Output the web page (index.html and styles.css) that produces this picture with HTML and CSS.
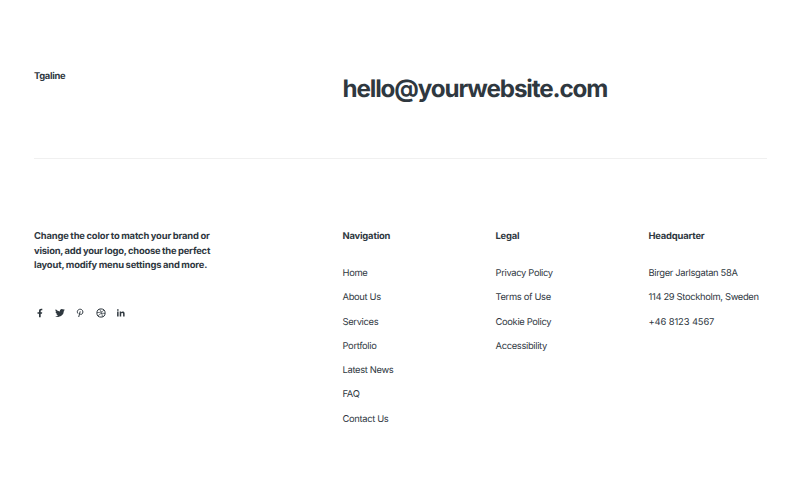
FILE: index.html
```html
<!DOCTYPE html>
<html lang="en">
<head>
<meta charset="utf-8">
<title>Tgaline</title>
<link rel="stylesheet" href="styles.css">
</head>
<body>
<footer class="footer">
  <div class="top">
    <div class="brand">Tgaline</div>
    <a class="email">hello@yourwebsite.com</a>
  </div>
  <div class="grid">
    <section class="about">
      <p>Change the color to match your brand or<br><span class="tight">vision, add your logo, choose the perfect</span><br>layout, modify menu settings and more.</p>
      <div class="social">
        <svg viewBox="0 0 12 12"><path d="M5 10.200V6.700H3.500V5.200H5V4c0-1.400.8-2.200 2.100-2.200H8.300V3.300H7.500c-.6 0-.8.3-.8.8v1.100h1.500L8 6.700H6.700v3.500z"/></svg>
        <svg viewBox="0 0 24 24" class="bird"><path d="M23 5a9 9 0 0 1-2.600.7 4.500 4.500 0 0 0 2-2.500 9 9 0 0 1-2.900 1.100A4.500 4.500 0 0 0 11.800 8.400 12.800 12.800 0 0 1 2.500 3.700a4.500 4.500 0 0 0 1.400 6 4.500 4.500 0 0 1-2-.6 4.500 4.500 0 0 0 3.600 4.500 4.500 4.500 0 0 1-2 .1 4.500 4.500 0 0 0 4.200 3.100A9 9 0 0 1 1 18.700 12.800 12.800 0 0 0 20.700 7.300 9 9 0 0 0 23 5z"/></svg>
        <svg viewBox="0 0 12 12" class="line"><path d="M4 6.600C2.300 4.500 4 2.200 6.200 2.200S9.500 4.600 8.600 6.300C7.900 7.700 6.300 7.600 5.800 6.700M6.200 4.400 4.700 10"/></svg>
        <svg viewBox="0 0 12 12" class="line"><circle cx="6" cy="6" r="4.100"/><path class="thin" d="M2 5.500c3 .2 5.500-.5 7-2.500M4.500 2.200C6.200 4.500 7 6.600 7.500 9.800M3.200 9c1.300-2.500 3.900-3.300 6.900-2.500"/></svg>
        <svg viewBox="0 0 12 12"><path d="M2.100 4.600h1.500V9.500H2.100zM2.100 2.300h1.500v1.400H2.100zM4.700 4.600h1.400v.7c.8-1.300 3.500-1.200 3.500 1.200v3H8.100V6.900c0-1.400-1.900-1.300-1.900 0v2.600H4.700z"/></svg>
      </div>
    </section>
    <nav>
      <h2>Navigation</h2>
      <ul><li>Home</li><li>About Us</li><li>Services</li><li>Portfolio</li><li>Latest News</li><li>FAQ</li><li>Contact Us</li></ul>
    </nav>
    <nav>
      <h2>Legal</h2>
      <ul><li>Privacy Policy</li><li>Terms of Use</li><li>Cookie Policy</li><li>Accessibility</li></ul>
    </nav>
    <section>
      <h2>Headquarter</h2>
      <ul><li>Birger Jarlsgatan 58A</li><li>114 29 Stockholm, Sweden</li><li>+46 8123 4567</li></ul>
    </section>
  </div>
</footer>
</body>
</html>
```
FILE: styles.css
```css
* { box-sizing: border-box; }
body { margin: 0; background: #fff; color: #2f383f; font-family: Inter, "Liberation Sans", sans-serif; font-size: 9.4px; text-rendering: geometricPrecision; }
.footer { padding: 69px 33px 0 34px; }
.top { display: grid; grid-template-columns: 308.5px 1fr; height: 90px; border-bottom: 1px solid #f0f0f0; }
.brand { font-weight: 650; line-height: 15px; letter-spacing: -0.3px; }
.email { font-size: 24.2px; font-weight: 650; line-height: 39px; letter-spacing: -1.12px; }
.grid { display: grid; grid-template-columns: 308.5px 153px 153px 1fr; padding-top: 71px; }
p, h2 { margin: 0; font-size: 9.4px; font-weight: 650; line-height: 14.6px; white-space: nowrap; letter-spacing: -0.18px; }
p { letter-spacing: -0.15px; word-spacing: -0.4px; }
.tight { letter-spacing: -0.2px; }
ul { list-style: none; margin: 17.55px 0 0; padding: 0; }
li { font-size: 9.4px; line-height: 24.25px; white-space: nowrap; letter-spacing: -0.34px; }
section:last-child li:last-child { letter-spacing: -0.12px; }
.social { display: flex; gap: 8.4px; margin-top: 33.2px; margin-left: -0.5px; }
.social svg { width: 12px; height: 12px; fill: #2f383f; }
.social .bird { padding: 0.7px; }
.social .line { fill: none; stroke: #2f383f; stroke-width: 1; }
.thin { stroke-width: 0.7; }
```
